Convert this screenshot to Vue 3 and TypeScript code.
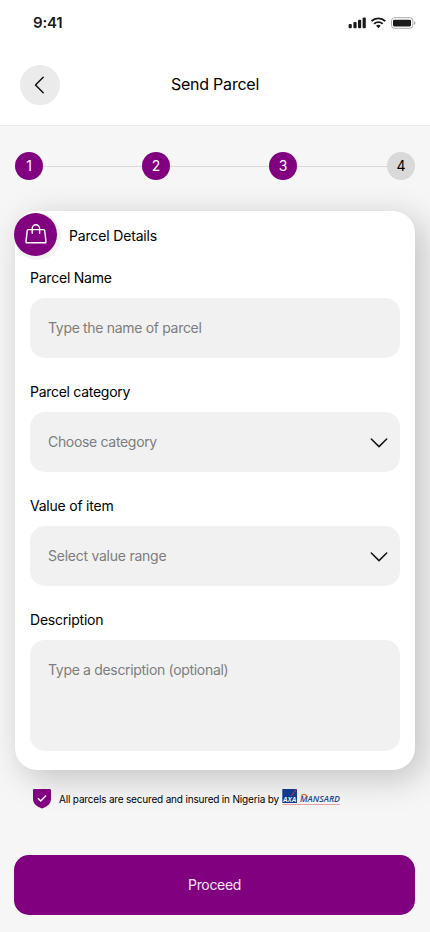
<script setup lang="ts">
import { ref } from 'vue'

interface Field {
  id: string
  label: string
  placeholder: string
  kind: 'text' | 'select' | 'area'
}

const steps = [1, 2, 3, 4]
const current = ref(3)

const fields: Field[] = [
  { id: 'name', label: 'Parcel Name', placeholder: 'Type the name of parcel', kind: 'text' },
  { id: 'category', label: 'Parcel category', placeholder: 'Choose category', kind: 'select' },
  { id: 'value', label: 'Value of item', placeholder: 'Select value range', kind: 'select' },
  { id: 'desc', label: 'Description', placeholder: 'Type a description (optional)', kind: 'area' },
]
</script>

<template>
  <main class="screen">
    <header class="top">
      <div class="status">
        <span class="time">9:41</span>
        <svg class="status-icons" width="68" height="14" viewBox="0 0 68 14">
          <g fill="#1a1a1a">
            <rect x="0.6" y="8" width="3.2" height="4.2" rx="1" />
            <rect x="5.4" y="6" width="3.2" height="6.2" rx="1" />
            <rect x="10" y="3.7" width="3.2" height="8.5" rx="1" />
            <rect x="14.6" y="1.4" width="3.2" height="10.8" rx="1" />
            <path d="M30.4 12.2l-2.300-2.400a3.400 3.400 0 0 1 4.600 0z" />
            <rect x="45" y="3.700" width="18" height="6.700" rx="1.300" />
          </g>
          <g fill="none" stroke="#1a1a1a" stroke-width="1.9">
            <path d="M23.500 5.100a10 10 0 0 1 13.800 0" />
            <path d="M26.100 7.900a6.200 6.200 0 0 1 8.600 0" />
          </g>
          <rect x="43.500" y="1.700" width="21.300" height="10.600" rx="3" fill="none" stroke="#a8a8a8" />
          <path d="M66 5.200v3.800a2 2 0 0 0 0-3.800z" fill="#a0a0a0" />
        </svg>
      </div>
      <div class="nav">
        <button class="back" type="button" aria-label="Back">
          <svg width="40" height="40" viewBox="0 0 40 40">
            <path d="M23.2 12.3L15.5 20l7.7 7.7" fill="none" stroke="#111" stroke-width="1.5" stroke-linecap="round" stroke-linejoin="round" />
          </svg>
        </button>
        <h1 class="title">Send Parcel</h1>
      </div>
    </header>

    <div class="steps">
      <template v-for="step in steps" :key="step">
        <span v-if="step > 1" class="line" :class="{ last: step === steps.length }"></span>
        <span class="step" :class="{ done: step <= current }">{{ step }}</span>
      </template>
    </div>

    <section class="card">
      <div class="card-head">
        <span class="badge">
          <svg width="43" height="43" viewBox="0 0 43 43" fill="none" stroke="#fff" stroke-width="1.4" stroke-linecap="round" stroke-linejoin="round">
            <path d="M14.200 16.600h15.400q1 0 1.100 1l1.300 11q.1 1.100-1 1.100H13q-1.100 0-1-1.100l1.200-11q.1-1 1-1z" />
            <path d="M18.200 20.200v-4.700a3.700 3.700 0 0 1 7.400 0v4.700" />
          </svg>
        </span>
        <h2 class="card-title">Parcel Details</h2>
      </div>

      <div v-for="field in fields" :key="field.id" class="field">
        <span class="label" :class="'label-' + field.id">{{ field.label }}</span>
        <div class="box" :class="field.kind">
          <span class="hint" :class="'hint-' + field.id">{{ field.placeholder }}</span>
          <svg v-if="field.kind === 'select'" width="18" height="11" viewBox="0 0 18 11">
            <path d="M1.300 2L9 9.600 16.700 2" fill="none" stroke="#111" stroke-width="1.500" stroke-linecap="round" stroke-linejoin="round" />
          </svg>
        </div>
      </div>
    </section>

    <div class="insured">
      <svg width="18" height="20" viewBox="0 0 18 20">
        <path d="M1.200 0h15.600q1.200 0 1.200 1.200v8.800c0 4.700-4.200 8-9 9.500C4.200 18 0 14.700 0 10V1.200Q0 0 1.200 0z" fill="#800080" />
        <path d="M5 9.300l2.700 2.700 5.400-5.400" fill="none" stroke="#fff" stroke-width="1.400" />
      </svg>
      <span class="insured-text">All parcels are secured and insured in Nigeria by</span>
      <svg class="logo" width="59" height="17" viewBox="0 0 59 17">
        <rect x="0.300" y="0" width="14.700" height="14" fill="#103a8e" />
        <path d="M8.800 7L14 0h1L9.800 7z" fill="#e0304a" />
        <text x="0.900" y="12.900" class="axa" textLength="13.300" lengthAdjust="spacingAndGlyphs">AXA</text>
        <text x="18" y="13.200" class="mansard" textLength="40" lengthAdjust="spacingAndGlyphs">MANSARD</text>
        <path d="M19.300 7.800q.3-2.400 2.700-2.400t2.700 2.400" fill="none" stroke="#ee6a24" stroke-width="1.200" />
        <rect x="0.300" y="15" width="57.700" height="0.800" fill="#e58b98" />
      </svg>
    </div>

    <button class="proceed" type="button">Proceed</button>
  </main>
</template>

<style>
body {
  background: #f6f6f6;
}
</style>

<style scoped>
.screen {
  box-sizing: border-box;
  width: 430px;
  height: 932px;
  overflow: hidden;
  background: #f6f6f6;
  color: #000;
  font-family: Inter, "Liberation Sans", sans-serif;
  display: flex;
  flex-direction: column;
}
button {
  border: 0;
  padding: 0;
  font: inherit;
}
h1,
h2 {
  margin: 0;
  font-weight: 400;
}
.top {
  box-sizing: border-box;
  height: 126px;
  flex: none;
  background: #fff;
  border-bottom: 1px solid #ececec;
}
.status {
  height: 46px;
  display: flex;
  align-items: center;
  justify-content: space-between;
  padding: 0 14px 0 33px;
}
.time {
  font-size: 15px;
  font-weight: 600;
  letter-spacing: -0.2px;
  padding-bottom: 1px;
  color: #1a1a1a;
}
.nav {
  margin-top: 19px;
  padding: 0 20px;
  display: grid;
  grid-template-columns: 40px 1fr 40px;
  align-items: center;
}
.back {
  width: 40px;
  height: 40px;
  border-radius: 50%;
  background: #ebebeb;
}
.back svg {
  display: block;
}
.title {
  font-size: 16px;
  line-height: 20px;
  text-align: center;
  letter-spacing: -0.22px;
  padding-bottom: 2px;
}
.steps {
  margin: 26px 15px 0;
  display: flex;
  align-items: center;
}
.step {
  box-sizing: border-box;
  width: 28px;
  height: 28px;
  padding-bottom: 1px;
  border-radius: 50%;
  display: flex;
  align-items: center;
  justify-content: center;
  background: #d9d9d9;
  font-size: 14px;
}
.step.done {
  background: #800080;
  color: #fff;
}
.line {
  width: 99px;
  height: 1px;
  background: #d9d9d9;
}
.line.last {
  width: 90px;
}
.card {
  box-sizing: border-box;
  margin: 31px 15px 0;
  height: 559px;
  flex: none;
  padding: 2px 15px 0;
  border-radius: 22px;
  background: #fff;
  box-shadow: 8px 8px 34px rgba(0, 0, 0, 0.22);
}
.card-head {
  display: flex;
  align-items: center;
  gap: 12px;
  margin-left: -16px;
  height: 43px;
}
.badge {
  width: 43px;
  height: 43px;
  border-radius: 50%;
  background: #800080;
  box-shadow: 2px 2px 0 2px #f3f3f3;
}
.badge svg {
  display: block;
}
.card-title {
  font-size: 14px;
  letter-spacing: -0.16px;
  padding-top: 1px;
}
.field {
  display: flex;
  flex-direction: column;
  gap: 10px;
  margin-bottom: 24px;
}
.card-head + .field {
  margin-top: 12px;
}
.label {
  height: 20px;
  line-height: 20px;
  font-size: 14px;
  letter-spacing: -0.22px;
}
.label-category {
  letter-spacing: -0.28px;
}
.box {
  box-sizing: border-box;
  height: 60px;
  padding: 0 12px 0 18px;
  border-radius: 15px;
  background: #f1f1f1;
  color: #7d7d7d;
  font-size: 14px;
  line-height: 20px;
  display: flex;
  align-items: center;
  justify-content: space-between;
}
.box.area {
  height: 111px;
  align-items: flex-start;
  padding-top: 20px;
}
.hint {
  letter-spacing: -0.32px;
}
.hint-value {
  letter-spacing: -0.25px;
}
.insured {
  margin: 19px 0 0 33px;
  height: 20px;
  display: flex;
  align-items: center;
}
.insured-text {
  margin-left: 8px;
  width: 219px;
  white-space: nowrap;
  font-size: 10px;
  line-height: 14px;
  letter-spacing: -0.18px;
}
.logo {
  margin: -3px 0 0 4px;
}
.axa {
  font: italic bold 7.500px "Liberation Sans", sans-serif;
  fill: #fff;
}
.mansard {
  font: italic 600 8.500px "Open Sans", sans-serif;
  fill: #1d4696;
}
.proceed {
  margin: 46px 15px 0 14px;
  height: 60px;
  padding-bottom: 2px;
  border-radius: 15px;
  background: #800080;
  color: #f5e6f5;
  font-size: 14px;
  letter-spacing: -0.33px;
}
</style>
